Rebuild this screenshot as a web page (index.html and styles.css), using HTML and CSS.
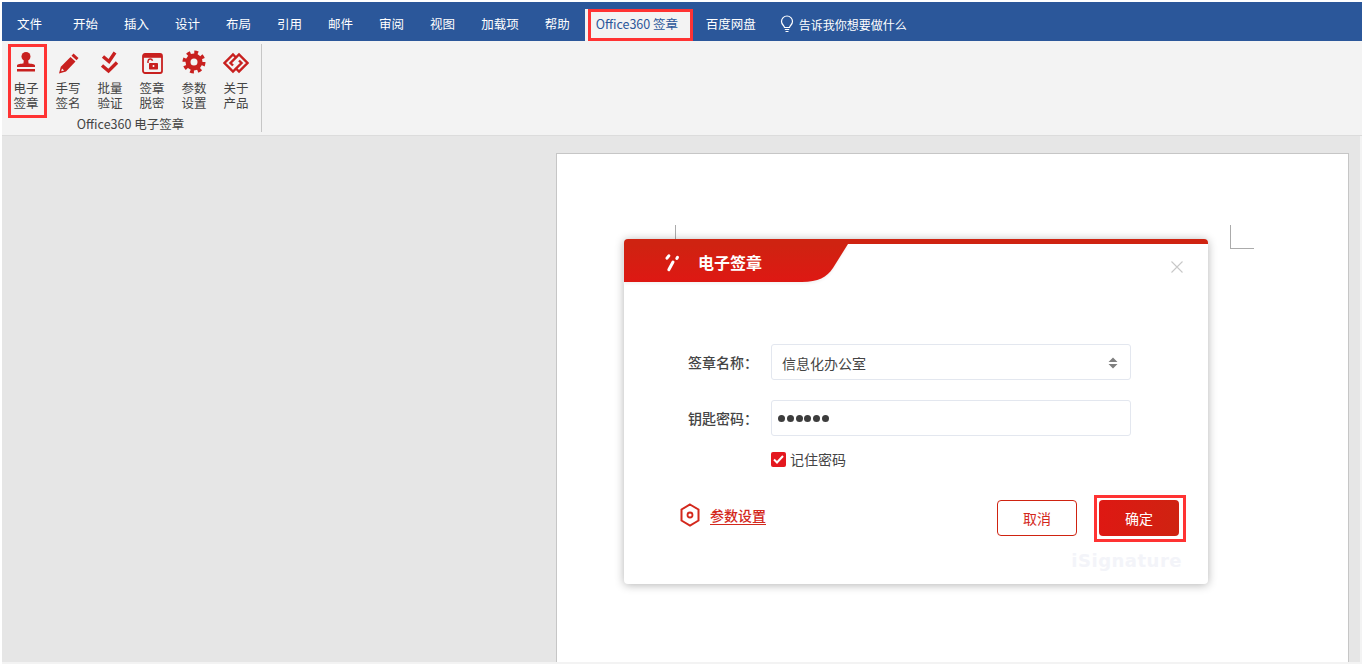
FILE: index.html
```html
<!DOCTYPE html>
<html lang="zh-CN">
<head>
    <meta charset="UTF-8">
    <title>Office360 电子签章</title>
    <link rel="stylesheet" href="styles.css">
</head>
<body>
    <div class="window">
        <div class="tabs">
            <span class="tab tab-file">文件</span>
            <span class="tab">开始</span>
            <span class="tab">插入</span>
            <span class="tab">设计</span>
            <span class="tab">布局</span>
            <span class="tab">引用</span>
            <span class="tab">邮件</span>
            <span class="tab">审阅</span>
            <span class="tab">视图</span>
            <span class="tab">加载项</span>
            <span class="tab">帮助</span>
            <span class="tab-active">Office360 签章</span>
            <span class="tab">百度网盘</span>
            <span class="tell-me">
                <svg width="16" height="18" viewBox="0 0 16 18" fill="none" stroke="#fff" stroke-width="1.2">
                    <path d="M5.5 12.5C5.2 10.5 2.5 9.5 2.5 6.5a5.5 5.5 0 0 1 11 0c0 3-2.700 4-3 6z"/>
                    <path d="M5.800 14.500h4.400M6.500 16.500h3"/>
                </svg>
                告诉我你想要做什么
            </span>
        </div>

        <div class="ribbon">
            <div class="group">
                <div class="group-buttons">
                    <div class="rb-btn rb-btn-marked">
                        <svg class="rb-icon" width="24" height="24" viewBox="0 0 24 24" fill="#c8201f">
                            <circle cx="12" cy="6.500" r="4.500"/>
                            <path d="M10 9h4l.6 4.500c2 .3 6.400.4 6.400 2V17H3v-1.500c0-1.600 4.400-1.700 6.400-2z"/>
                            <rect x="3" y="19" width="18" height="2.500"/>
                        </svg>
                        <span>电子<br>签章</span>
                    </div>
                    <div class="rb-btn">
                        <svg class="rb-icon" width="24" height="24" viewBox="0 0 24 24" fill="#c8201f">
                            <path d="M17.500 3.500l5 4.500-2 2.300-5-4.500z"/>
                            <path d="M14.500 7l5 4.500-9.500 10L3 23.500l1.800-6.800zM6 18.500l-.8 2.800 2.900-.8z" fill-rule="evenodd"/>
                        </svg>
                        <span>手写<br>签名</span>
                    </div>
                    <div class="rb-btn">
                        <svg class="rb-icon" width="24" height="24" viewBox="0 0 24 24" fill="none" stroke="#c8201f" stroke-width="3.400">
                            <path d="M5 6.500l6 5 6-9"/>
                            <path d="M4 15.500l6.500 5.500 8.500-8.500"/>
                        </svg>
                        <span>批量<br>验证</span>
                    </div>
                    <div class="rb-btn">
                        <svg class="rb-icon" width="24" height="24" viewBox="0 0 24 24" fill="none" stroke="#c8201f">
                            <rect x="3" y="4" width="19" height="19" rx="2" stroke-width="1.800"/>
                            <path d="M3 6h19" stroke-width="3.600"/>
                            <path d="M8 13v-1.800a2.300 2.300 0 0 1 4.500-.5" stroke-width="1.500"/>
                            <rect x="9" y="13" width="9" height="6.500" rx=".8" fill="#c8201f" stroke="none"/>
                            <circle cx="13.500" cy="16" r="1" fill="#fff" stroke="none"/>
                        </svg>
                        <span>签章<br>脱密</span>
                    </div>
                    <div class="rb-btn">
                        <svg class="rb-icon" width="24" height="24" viewBox="0 0 24 24" fill="none" stroke="#c8201f">
                            <circle cx="12" cy="12" r="9.500" stroke-width="4" stroke-dasharray="3.700 3.760"/>
                            <circle cx="12" cy="12" r="6" stroke-width="5"/>
                        </svg>
                        <span>参数<br>设置</span>
                    </div>
                    <div class="rb-btn">
                        <svg class="rb-icon" width="26" height="24" viewBox="0 0 26 24" fill="none" stroke="#c8201f" stroke-width="2.400">
                            <path d="M13.500 8L10 4.500 1.500 13 10 21.500 18.500 13 16 10.500"/>
                            <path d="M12.500 18l3.500 3.500L24.500 13 16 4.500 7.500 13l2.500 2.500"/>
                        </svg>
                        <span>关于<br>产品</span>
                    </div>
                </div>
                <div class="group-label">Office360 电子签章</div>
            </div>
        </div>

        <div class="workspace">
            <div class="page">
                <span class="crop crop-left"></span>
                <span class="crop crop-right"></span>
            </div>

            <div class="dialog">
                <div class="dialog-head">
                    <svg class="head-shape" width="224" height="38" viewBox="0 0 224 38">
                        <defs>
                            <linearGradient id="headFill" x1="0" y1="0" x2="0" y2="1">
                                <stop offset="0" stop-color="#cf2311"/>
                                <stop offset="1" stop-color="#de1813"/>
                            </linearGradient>
                        </defs>
                        <path d="M0 0H224L209 24C203 33 194 38 178 38H0Z" fill="url(#headFill)"/>
                    </svg>
                    <svg class="head-icon" width="18" height="20" viewBox="0 0 18 20" fill="none" stroke="#fff" stroke-width="3" stroke-linecap="round">
                        <path d="M6.800 2.800L5 5.200"/>
                        <path d="M11 9L6.800 16.800"/>
                        <path d="M15.500 4.300L14.800 5.500"/>
                    </svg>
                    <span class="head-title">电子签章</span>
                    <svg class="close" width="12" height="12" viewBox="0 0 12 12" stroke="#c8c8c8" stroke-width="1.100">
                        <path d="M.5 .5l11 11M11.500 .5l-11 11"/>
                    </svg>
                </div>

                <div class="form">
                    <div class="form-row">
                        <label class="form-label">签章名称：</label>
                        <div class="field">
                            信息化办公室
                            <svg class="spinner" width="10" height="12" viewBox="0 0 10 12" fill="#808080">
                                <path d="M5 .5L9.500 5H.5zM5 11.500L.5 7h9z"/>
                            </svg>
                        </div>
                    </div>
                    <div class="form-row">
                        <label class="form-label">钥匙密码：</label>
                        <div class="field field-password">
                            <i></i><i></i><i></i><i></i><i></i><i></i>
                        </div>
                    </div>
                    <div class="remember">
                        <span class="checkbox">
                            <svg width="11" height="9" viewBox="0 0 11 9" fill="none" stroke="#fff" stroke-width="2">
                                <path d="M1 4.500l3 3 6-6.500"/>
                            </svg>
                        </span>
                        记住密码
                    </div>
                </div>

                <div class="dialog-foot">
                    <div class="settings">
                        <svg width="20" height="24" viewBox="0 0 20 24" fill="none" stroke="#d3281c">
                            <path d="M10 1.500l8.500 5v11l-8.500 5-8.500-5v-11z" stroke-width="2"/>
                            <circle cx="10" cy="12" r="2.500" stroke-width="1.800"/>
                        </svg>
                        <a class="settings-link">参数设置</a>
                    </div>
                    <button class="btn btn-cancel">取消</button>
                    <span class="btn-marked"><button class="btn btn-ok">确定</button></span>
                </div>
                <div class="watermark">iSignature</div>
            </div>
        </div>
    </div>
</body>
</html>
```

FILE: styles.css
```css
* {
    box-sizing: border-box;
}
html, body {
    height: 100%;
}
body {
    margin: 0;
    padding: 2px 3px 0 2px;
    background-color: #fff;
    overflow: hidden;
    font-family: "Noto Sans CJK SC", sans-serif;
    font-size: 12.5px;
    color: #444;
}
.window {
    height: 662px;
    display: flex;
    flex-direction: column;
    background-color: #f3f3f3;
}

/* title tabs */
.tabs {
    height: 39px;
    flex: none;
    display: flex;
    align-items: flex-end;
    background-color: #2b579a;
    color: #fff;
    line-height: 29px;
}
.tab {
    padding: 0 13px 3px;
    white-space: nowrap;
}
.tab-file {
    padding: 0 15px 3px;
    width: 58px;
}
.tab-active {
    width: 105px;
    height: 32px;
    margin-left: 5px;
    padding-left: 8px;
    color: #2b579a;
    background-color: #f3f3f3;
    outline: 3px solid #ff3333;
    outline-offset: -3px;
    box-shadow: -3px 0 0 #f3f3f3;
    white-space: nowrap;
}
.tell-me {
    display: flex;
    align-items: center;
    gap: 4px;
    margin-left: 10px;
    height: 32px;
    padding-bottom: 2px;
    font-size: 12px;
}

/* ribbon */
.ribbon {
    height: 95px;
    flex: none;
    display: flex;
    background-color: #f3f3f3;
    border-bottom: 1px solid #dcdcdc;
}
.group {
    width: 260px;
    height: 88px;
    margin-top: 3px;
    border-right: 1px solid #c6c6c6;
    text-align: center;
}
.group-buttons {
    display: flex;
    padding-left: 3px;
}
.rb-btn {
    width: 42px;
    height: 74px;
    display: flex;
    flex-direction: column;
    align-items: center;
    font-family: "Liberation Sans", "Noto Sans CJK SC", sans-serif;
    line-height: 15px;
    text-align: center;
    padding-top: 6px;
}
.rb-btn-marked {
    outline: 3px solid #ff3333;
    outline-offset: -3px;
    width: 39px;
    margin-left: 3px;
    padding-right: 3px;
}
.rb-icon {
    flex: none;
    margin-bottom: 8px;
}
.group-label {
    margin-top: -2px;
    line-height: 16px;
    padding-right: 2px;
}

/* document area */
.workspace {
    flex: 1;
    position: relative;
    display: flex;
    justify-content: flex-end;
    padding: 17px 11px 0 0;
    margin: 0 2px 2px 0;
    background-color: #e6e6e6;
    overflow: hidden;
}
.page {
    width: 793px;
    position: relative;
    background-color: #fff;
    border: 1px solid #c6c6c6;
    border-bottom: none;
}
.crop {
    position: absolute;
    width: 24px;
    height: 24px;
    top: 71px;
    border-color: #ababab;
    border-style: solid;
    border-width: 0;
}
.crop-left {
    left: 95px;
    border-right-width: 1px;
    border-bottom-width: 1px;
}
.crop-right {
    left: 673px;
    border-left-width: 1px;
    border-bottom-width: 1px;
}

/* signature dialog */
.dialog {
    position: absolute;
    left: 622px;
    top: 103px;
    width: 584px;
    height: 345px;
    background-color: #fff;
    border-top: 5px solid #cf2311;
    border-radius: 4px;
    box-shadow: 0 1px 10px rgba(0, 0, 0, 0.3);
    font-size: 14px;
}
.dialog-head {
    height: 38px;
    position: relative;
}
.head-shape {
    position: absolute;
    left: 0;
    top: 0;
    filter: drop-shadow(0 2px 1px #f4f4f4);
}
.head-icon {
    position: absolute;
    left: 38px;
    top: 9px;
}
.head-title {
    position: absolute;
    left: 74px;
    top: 6px;
    color: #fff;
    font-size: 16px;
    font-weight: bold;
    line-height: 24px;
}
.close {
    position: absolute;
    left: 547px;
    top: 17px;
}
.form {
    padding: 62px 0 0 64px;
}
.form-row {
    display: flex;
    align-items: center;
    margin-bottom: 20px;
}
.form-label {
    width: 83px;
    font-weight: 500;
    color: #444;
    line-height: 36px;
    white-space: nowrap;
}
.field {
    width: 360px;
    height: 36px;
    display: flex;
    align-items: center;
    justify-content: space-between;
    padding: 1px 12px 0 10px;
    border: 1px solid #e3e7ef;
    border-radius: 3px;
    color: #444;
}
.field-password {
    justify-content: flex-start;
    gap: 1.800px;
    padding-left: 6px;
}
.field-password i {
    width: 7px;
    height: 7px;
    border-radius: 50%;
    background-color: #3d3d3d;
}
.remember {
    display: flex;
    align-items: center;
    gap: 4px;
    margin: -5px 0 0 83px;
    line-height: 16px;
}
.checkbox {
    width: 15px;
    height: 15px;
    display: flex;
    align-items: center;
    justify-content: center;
    background-color: #e4181f;
    border-radius: 2px;
}
.dialog-foot {
    display: flex;
    align-items: flex-start;
    margin-top: 33px;
    padding-left: 56px;
    height: 36px;
}
.settings {
    width: 317px;
    display: flex;
    align-items: center;
    gap: 10px;
    margin-top: 3px;
}
.settings-link {
    color: #d3281c;
    font-weight: 500;
    line-height: 18px;
    text-decoration: underline;
    text-underline-offset: 3px;
}
.btn {
    width: 80px;
    height: 36px;
    font-family: inherit;
    font-size: 14px;
    border-radius: 4px;
    padding: 0;
}
.btn-cancel {
    color: #d3281c;
    background-color: #fff;
    border: 1px solid #cf2311;
}
.btn-marked {
    display: block;
    margin: -5px 0 0 17px;
    padding: 2px;
    border: 3px solid #ff3333;
    height: 47px;
    width: 92px;
}
.btn-ok {
    display: block;
    color: #fff;
    border: none;
    background: linear-gradient(90deg, #de1813, #cf2311);
}
.watermark {
    position: absolute;
    right: 26px;
    bottom: 13px;
    color: #f3f4f9;
    font-family: "DejaVu Sans", sans-serif;
    font-size: 18px;
    font-weight: bold;
    letter-spacing: 0.500px;
    line-height: 20px;
}
```
